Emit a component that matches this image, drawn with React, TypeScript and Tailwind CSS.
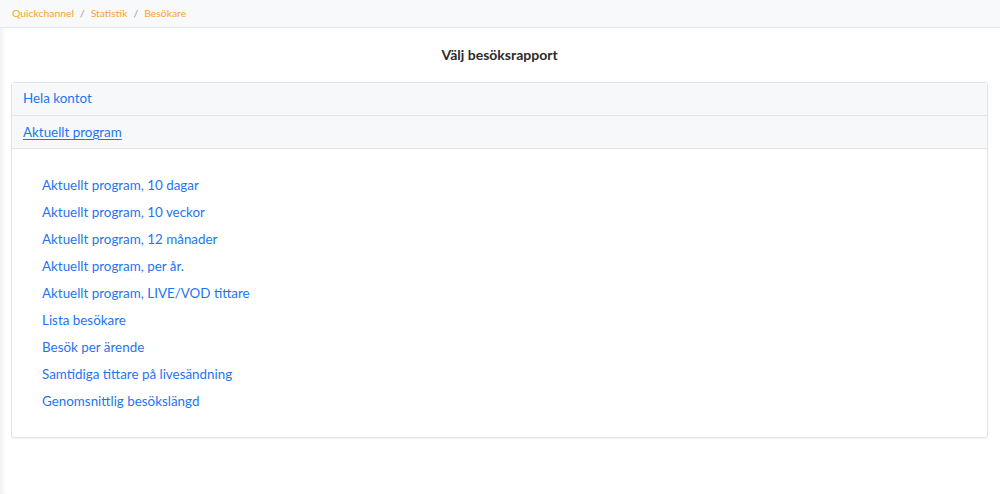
const reports = [
  "Aktuellt program, 10 dagar",
  "Aktuellt program, 10 veckor",
  "Aktuellt program, 12 månader",
  "Aktuellt program, per år.",
  "Aktuellt program, LIVE/VOD tittare",
  "Lista besökare",
  "Besök per ärende",
  "Samtidiga tittare på livesändning",
  "Genomsnittlig besökslängd",
];

const crumbs = ["Quickchannel", "Statistik", "Besökare"];

export default function App() {
  return (
    <div className="w-[1000px] h-[494px] bg-white font-['Lato','Noto_Sans',sans-serif] text-[#333] overflow-hidden">
      <nav className="h-[28px] flex items-center px-3 bg-[#f8f9fa] border-b border-[#e6e7e8] text-[10.4px]">
        {crumbs.map((c, i) => (
          <span key={c} className="flex items-center">
            {i > 0 && <span className="px-[6px] text-[#9a9a9a]">/</span>}
            <a href="#" className="text-[#f7a234]">
              {c}
            </a>
          </span>
        ))}
      </nav>

      <main className="h-[466px] pl-[11px] pr-[12px] shadow-[inset_7px_0_6px_-5px_rgba(0,0,0,0.08)]">
        <h1 className="h-[54px] pb-[1px] flex items-center justify-center text-[14px] font-bold text-[#2b2b2b]">
          Välj besöksrapport
        </h1>

        <div className="border border-[#e3e4e6] rounded-[3px] shadow-[0_1px_2px_rgba(0,0,0,0.06)]">
          <div className="h-[33px] pb-[1px] flex items-center px-[11px] bg-[#f7f8fa] border-b border-[#e3e4e6] text-[13.4px]">
            <a href="#" className="text-[#1f74f0]">
              Hela kontot
            </a>
          </div>
          <div className="h-[33px] flex items-center px-[11px] bg-[#f7f8fa] border-b border-[#e3e4e6] text-[13.4px]">
            <a href="#" className="text-[#1f74f0] underline underline-offset-2">
              Aktuellt program
            </a>
          </div>
          <ul className="pt-[23px] pb-[22px] pl-[30px] text-[13.4px]">
            {reports.map((r) => (
              <li key={r} className="h-[27px] leading-[27px]">
                <a href="#" className="text-[#1f74f0]">
                  {r}
                </a>
              </li>
            ))}
          </ul>
        </div>
      </main>
    </div>
  );
}
